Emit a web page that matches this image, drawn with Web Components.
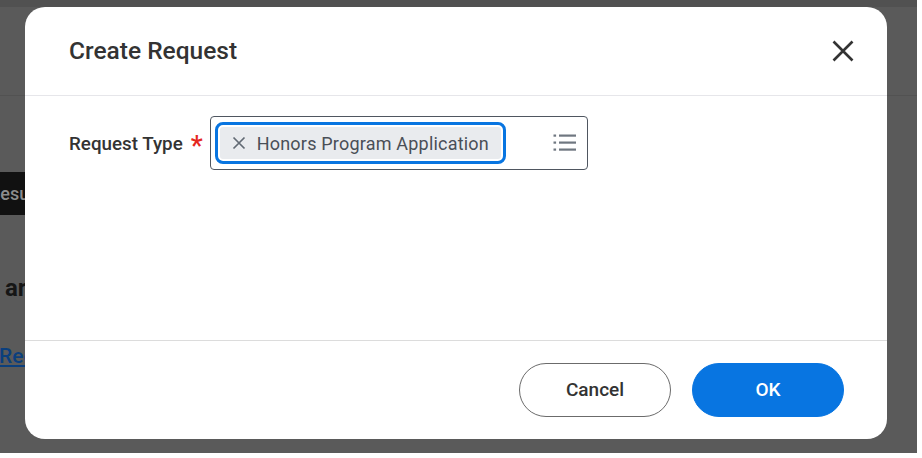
<!DOCTYPE html>
<html>
<head>
<meta charset="utf-8">
<title>Create Request</title>
<style>
  html, body { margin: 0; padding: 0; background: #fff; font-family: Roboto, "Liberation Sans", sans-serif; }
</style>
</head>
<body>
<page-backdrop>
  <request-dialog heading="Create Request">
    <form-field label="Request Type">
      <prompt-input value="Honors Program Application"></prompt-input>
    </form-field>
    <pill-button slot="footer">Cancel</pill-button>
    <pill-button slot="footer" primary>OK</pill-button>
  </request-dialog>
</page-backdrop>

<script>
const backdropTemplate = document.createElement("template");
backdropTemplate.innerHTML = `
<style>
  :host {
    display: block;
    position: relative;
    width: 917px;
    height: 453px;
    overflow: hidden;
    background: #5a5a5a;
    font-family: Roboto, "Liberation Sans", sans-serif;
  }
  .under { display: flex; flex-direction: column; align-items: flex-start; }
  .top { align-self: stretch; height: 7px; background: #515151; flex: none; }
  .rule { align-self: stretch; height: 1px; margin-top: 88px; background: #525252; flex: none; }
  .tag {
    margin-top: 76px; width: 25px; height: 43px; background: #111; color: #8c8c8c;
    font-size: 18px; font-weight: 500; line-height: 43px; white-space: nowrap;
    text-indent: -11px;
  }
  .title {
    margin-top: 57px; white-space: nowrap;
    color: #161616; font-size: 24px; font-weight: 700; line-height: 32px; text-indent: 5px;
  }
  .link {
    margin-top: 40px; margin-left: -1px; white-space: nowrap;
    color: #0b3f7d; font-size: 21px; font-weight: 500; line-height: 24px; text-decoration: underline;
  }
  ::slotted(request-dialog) { position: absolute; left: 25px; top: 7px; }
</style>
<div class="under">
  <div class="top"></div>
  <div class="rule"></div>
  <div class="tag">Results</div>
  <div class="title">are</div>
  <div class="link">Request</div>
</div>
<slot></slot>
`;
class PageBackdrop extends HTMLElement {
  constructor() {
    super();
    this.attachShadow({ mode: "open" }).appendChild(backdropTemplate.content.cloneNode(true));
  }
}
customElements.define("page-backdrop", PageBackdrop);

const dialogTemplate = document.createElement("template");
dialogTemplate.innerHTML = `
<style>
  :host {
    display: flex;
    flex-direction: column;
    box-sizing: border-box;
    width: 862px;
    height: 432px;
    background: #fff;
    border-radius: 20px;
    overflow: hidden;
    color: #333;
  }
  header {
    flex: none;
    box-sizing: border-box;
    height: 89px;
    display: flex;
    align-items: center;
    justify-content: space-between;
    padding: 0 31px 0 44px;
    border-bottom: 1px solid #e6e6ea;
  }
  h1 { margin: 0; font-size: 24.5px; font-weight: 500; line-height: 30px; color: #333; }
  button {
    all: unset; display: flex; width: 26px; height: 26px;
  }
  main { flex: 1; padding: 20px 44px 0; }
  footer {
    flex: none;
    box-sizing: border-box;
    height: 99px;
    display: flex;
    justify-content: flex-end;
    gap: 21px;
    padding: 22px 43px 0;
    border-top: 1px solid #dcdcdc;
  }
</style>
<header>
  <h1></h1>
  <button aria-label="Close">
    <svg width="26" height="26" viewBox="0 0 26 26"><path d="M3.5 3.5 22.5 22.5M22.5 3.5 3.5 22.5" fill="none" stroke="#333" stroke-width="2.6"/></svg>
  </button>
</header>
<main><slot></slot></main>
<footer><slot name="footer"></slot></footer>
`;
class RequestDialog extends HTMLElement {
  constructor() {
    super();
    this.attachShadow({ mode: "open" }).appendChild(dialogTemplate.content.cloneNode(true));
  }
  connectedCallback() {
    this.shadowRoot.querySelector("h1").textContent = this.getAttribute("heading");
  }
}
customElements.define("request-dialog", RequestDialog);

const fieldTemplate = document.createElement("template");
fieldTemplate.innerHTML = `
<style>
  :host { display: flex; align-items: center; height: 54px; }
  label { font-size: 18.8px; font-weight: 500; color: #333; white-space: nowrap; padding-top: 1px; }
  .req { color: #e5281f; font-size: 27px; font-weight: 500; line-height: 20px; margin-left: 8px; margin-right: 7px; position: relative; top: 3px; }
</style>
<label></label><span class="req">*</span>
<slot></slot>
`;
class FormField extends HTMLElement {
  constructor() {
    super();
    this.attachShadow({ mode: "open" }).appendChild(fieldTemplate.content.cloneNode(true));
  }
  connectedCallback() {
    this.shadowRoot.querySelector("label").textContent = this.getAttribute("label");
  }
}
customElements.define("form-field", FormField);

const promptTemplate = document.createElement("template");
promptTemplate.innerHTML = `
<style>
  :host {
    display: flex;
    align-items: center;
    justify-content: space-between;
    box-sizing: border-box;
    width: 378px;
    height: 54px;
    padding: 0 10px 0 4px;
    border: 1.5px solid #4f5660;
    border-radius: 4px;
    background: #fff;
  }
  .pill {
    display: flex;
    align-items: center;
    box-sizing: border-box;
    height: 42px;
    width: 291px;
    padding: 0 14px 0 14px;
    gap: 11px;
    border: 3px solid #0875e1;
    border-radius: 8px;
    background: #e9ebee;
    box-shadow: inset 0 0 0 2px #fff;
    color: #494f57;
    font-size: 18px;
    letter-spacing: 0.2px;
    white-space: nowrap;
  }
  svg { flex: none; display: block; }
</style>
<div class="pill">
  <svg width="14" height="14" viewBox="0 0 14 14"><path d="M1.5 1.5 12.5 12.5M12.5 1.5 1.5 12.5" fill="none" stroke="#626a74" stroke-width="1.7"/></svg>
  <span></span>
</div>
<svg width="24" height="20" viewBox="0 0 24 20" fill="#6f7780">
  <rect x="0.5" y="1.5" width="2.6" height="2.2"/><rect x="6" y="1.5" width="17" height="2.2"/>
  <rect x="0.5" y="8.5" width="2.6" height="2.2"/><rect x="6" y="8.5" width="17" height="2.2"/>
  <rect x="0.5" y="15.5" width="2.6" height="2.2"/><rect x="6" y="15.5" width="17" height="2.2"/>
</svg>
`;
class PromptInput extends HTMLElement {
  constructor() {
    super();
    this.attachShadow({ mode: "open" }).appendChild(promptTemplate.content.cloneNode(true));
  }
  connectedCallback() {
    this.shadowRoot.querySelector("span").textContent = this.getAttribute("value");
  }
}
customElements.define("prompt-input", PromptInput);

const buttonTemplate = document.createElement("template");
buttonTemplate.innerHTML = `
<style>
  :host {
    display: flex;
    align-items: center;
    justify-content: center;
    box-sizing: border-box;
    width: 152px;
    height: 54px;
    padding-bottom: 2px;
    border: 1.5px solid #6b6b6b;
    border-radius: 27px;
    background: #fff;
    color: #333;
    font-size: 19px;
    font-weight: 500;
  }
  :host([primary]) { background: #0875e1; border-color: #0875e1; color: #fff; }
</style>
<slot></slot>
`;
class PillButton extends HTMLElement {
  constructor() {
    super();
    this.attachShadow({ mode: "open" }).appendChild(buttonTemplate.content.cloneNode(true));
  }
}
customElements.define("pill-button", PillButton);
</script>
</body>
</html>
